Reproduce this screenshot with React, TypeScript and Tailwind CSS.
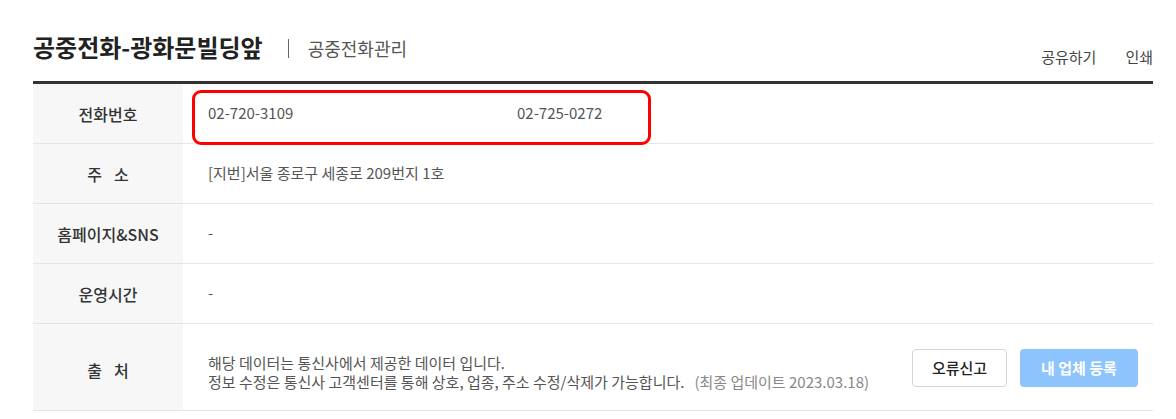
import React from "react";

const font = { fontFamily: '"Noto Sans CJK KR", "Noto Sans", sans-serif' };

function Label({ children, className = "" }: { children: React.ReactNode; className?: string }) {
  return (
    <div className={`w-[150px] shrink-0 bg-[#f7f7f7] flex items-center justify-center text-[16px] font-medium text-[#333] ${className}`}>
      {children}
    </div>
  );
}

function Spaced({ a, b }: { a: string; b: string }) {
  return (
    <span className="flex gap-[12px]">
      <span>{a}</span>
      <span>{b}</span>
    </span>
  );
}

export default function App() {
  return (
    <div className="bg-white w-[1176px] h-[419px] overflow-hidden" style={font}>
      <div className="ml-[33px] w-[1120px]">
        <div className="flex justify-between h-[81px]">
          <div className="flex items-center pt-[32px] self-start h-[62px]">
            <h1 className="text-[24px] font-bold text-[#222] leading-[30px]">공중전화-광화문빌딩앞</h1>
            <span className="ml-[25px] w-px h-[19px] bg-[#666] mt-[2px]" />
            <span className="ml-[19px] text-[18px] text-[#555] leading-[24px] mt-[1px]">공중전화관리</span>
          </div>
          <div className="flex items-end pb-[13px] gap-[29px] text-[15px] text-[#444] leading-[22px]">
            <span>공유하기</span>
            <span>인쇄</span>
          </div>
        </div>
        <div className="border-t-[3px] border-[#333]">
          <div className="relative flex h-[60px] border-b border-[#e5e5e5]">
            <Label>전화번호</Label>
            <div className="flex items-center pl-[25px] text-[15px] text-[#555]">
              <span className="w-[309px]">02-720-3109</span>
              <span>02-725-0272</span>
            </div>
            <div className="absolute left-[159px] top-[6px] w-[459px] h-[55px] border-[3px] border-[#ff0000] rounded-[9px]" />
          </div>
          <div className="flex h-[60px] border-b border-[#e5e5e5]">
            <Label>
              <Spaced a="주" b="소" />
            </Label>
            <div className="flex items-center pl-[25px] text-[15px] text-[#555]">[지번]서울 종로구 세종로 209번지 1호</div>
          </div>
          <div className="flex h-[60px] border-b border-[#e5e5e5]">
            <Label>홈페이지&amp;SNS</Label>
            <div className="flex items-center pl-[25px] text-[15px] text-[#555]">-</div>
          </div>
          <div className="flex h-[60px] border-b border-[#e5e5e5]">
            <Label>운영시간</Label>
            <div className="flex items-center pl-[25px] text-[15px] text-[#555]">-</div>
          </div>
          <div className="flex h-[87px] border-b border-[#e5e5e5]">
            <Label className="pt-[5px]">
              <Spaced a="출" b="처" />
            </Label>
            <div className="flex-1 flex items-center justify-between pl-[25px] pr-[15px]">
              <div className="text-[15px] text-[#555] leading-[19px] pt-[9px]">
                <div>해당 데이터는 통신사에서 제공한 데이터 입니다.</div>
                <div>
                  정보 수정은 통신사 고객센터를 통해 상호, 업종, 주소 수정/삭제가 가능합니다.
                  <span className="ml-[10px] text-[#888]">(최종 업데이트 2023.03.18)</span>
                </div>
              </div>
              <div className="flex gap-[13px] pt-[2px]">
                <button className="w-[95px] h-[38px] border border-[#d5d5d5] rounded-[4px] bg-white text-[15px] text-[#222] font-medium">오류신고</button>
                <button className="w-[118px] h-[38px] rounded-[4px] bg-[#8ec4fd] text-[15px] text-white font-bold">내 업체 등록</button>
              </div>
            </div>
          </div>
        </div>
      </div>
    </div>
  );
}
